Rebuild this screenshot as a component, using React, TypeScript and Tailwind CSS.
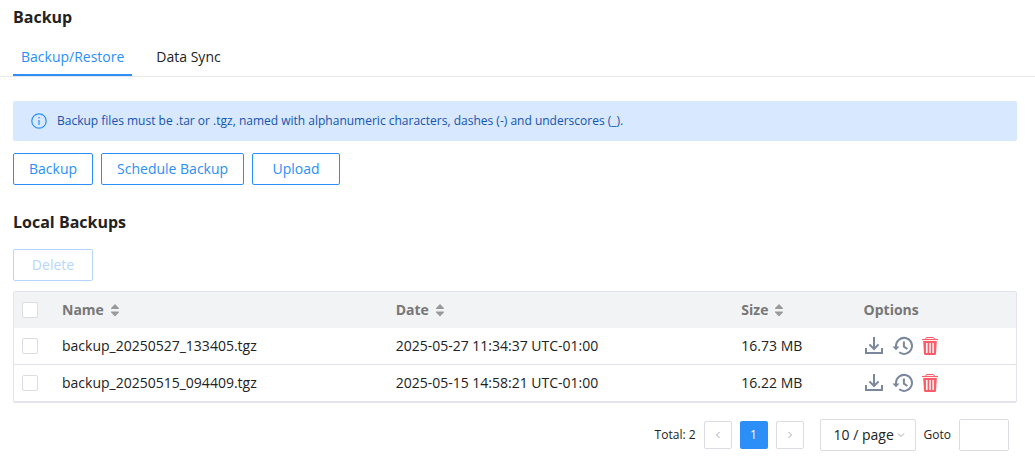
import { useState } from 'react';
import type { ReactNode } from 'react';

type Backup = { name: string; date: string; size: string };

const backups: Backup[] = [
  { name: 'backup_20250527_133405.tgz', date: '2025-05-27 11:34:37 UTC-01:00', size: '16.73 MB' },
  { name: 'backup_20250515_094409.tgz', date: '2025-05-15 14:58:21 UTC-01:00', size: '16.22 MB' },
];

function InfoIcon() {
  return (
    <svg viewBox="0 0 16 16" className="size-4 shrink-0" fill="none" stroke="#2b8ff7" aria-hidden="true">
      <circle cx="8" cy="8" r="7.2" strokeWidth="1.2" />
      <path d="M8 7v5" strokeWidth="1.2" />
      <circle cx="8" cy="4.8" r=".8" fill="#2b8ff7" stroke="none" />
    </svg>
  );
}

function SortIcon() {
  return (
    <svg viewBox="0 0 8 14" className="h-3.5 w-2" fill="#999999" stroke="#999999" strokeLinejoin="round" aria-hidden="true">
      <path d="M4 1.8 7.400 5.400H.6Z" strokeWidth="1.200" />
      <path d="M4 12.600.6 9h6.800Z" strokeWidth="1.200" />
    </svg>
  );
}

function DownloadIcon() {
  return (
    <svg viewBox="0 0 20 20" className="size-5" fill="none" stroke="#7a879c" strokeWidth="2" aria-hidden="true">
      <path d="M10 1v12" />
      <path d="M5.400 8.400 10 13l4.600-4.600" />
      <path d="M2 12v5h16v-5" />
    </svg>
  );
}

function HistoryIcon() {
  return (
    <svg viewBox="0 0 22 20" className="h-5 w-[22px]" fill="none" stroke="#7a879c" strokeWidth="2" aria-hidden="true">
      <path d="M4 11.500V10A8 8 0 1 1 7.200 16.300" />
      <path d="M.4 10.400h7.200L4 14.200Z" fill="#7a879c" stroke="none" />
      <path d="M11.900 5.500v5.100l3.500 2.400" />
    </svg>
  );
}

function TrashIcon() {
  return (
    <svg viewBox="0 0 16 20" className="h-5 w-4" fill="none" stroke="#fc5d68" aria-hidden="true">
      <path d="M3.500 3 4.500 1.500h7L12.500 3" strokeWidth="1" />
      <path d="M0 3.500h16" strokeWidth="1.200" />
      <path d="M1.200 5h13.600l-.8 12.800q-.1 1.200-1.200 1.200H3.200q-1.100 0-1.200-1.200Z" fill="#fc5d68" stroke="none" />
      <path d="M4.800 7v10M8 7v10M11.200 7v10" stroke="#ffffff" strokeWidth="1.500" />
    </svg>
  );
}

function Chevron({ d }: { d: string }) {
  return (
    <svg viewBox="0 0 8 8" className="size-2" fill="none" stroke="#a8a8a8" aria-hidden="true">
      <path d={d} />
    </svg>
  );
}

function OutlineButton({ children, disabled, wide }: { children: ReactNode; disabled?: boolean; wide?: boolean }) {
  return (
    <button
      type="button"
      disabled={disabled}
      className={`h-8 rounded-xs border border-[#2b8ff7] text-[#2b8ff7] disabled:border-[#b5d6fe] disabled:text-[#b5d6fe] ${wide ? 'min-w-22' : 'min-w-20 px-[15px]'}`}
    >
      {children}
    </button>
  );
}

function Check({ label }: { label: string }) {
  return (
    <input
      type="checkbox"
      aria-label={label}
      className="block size-4 appearance-none rounded-xs border border-[#dcdce3] bg-white checked:border-[#2b8ff7] checked:bg-[#2b8ff7]"
    />
  );
}

function SortHeader({ children }: { children: string }) {
  return (
    <th scope="col" className="h-9 px-2 text-left font-bold">
      <button type="button" className="flex items-center gap-[7px]">
        {children}
        <SortIcon />
      </button>
    </th>
  );
}

export default function App() {
  const [page, setPage] = useState('');

  return (
    <main className="bg-white pb-3 font-['Open_Sans','Noto_Sans',sans-serif] text-sm leading-5 text-[#222222]">
      <h1 className="px-[13px] pt-[5px] text-base leading-6 font-bold">Backup</h1>

      <nav className="mt-2 flex gap-4 border-b border-[#e8e8e8] px-[13px]">
        <a href="#restore" aria-current="page" className="border-b-2 border-[#2b8ff7] px-2 pt-[10px] pb-[7px] text-[#2b8ff7]">
          Backup/Restore
        </a>
        <a href="#sync" className="border-b-2 border-transparent px-2 pt-[10px] pb-[7px]">
          Data Sync
        </a>
      </nav>

      <div className="mr-[18px] ml-[13px] pt-6">
        <p className="flex min-h-10 items-center gap-[10px] rounded-xs bg-[#d7e8ff] px-[18px] text-xs text-[#1554ad]">
          <InfoIcon />
          Backup files must be .tar or .tgz, named with alphanumeric characters, dashes (-) and underscores (_).
        </p>

        <div className="mt-3 flex gap-2">
          <OutlineButton>Backup</OutlineButton>
          <OutlineButton>Schedule Backup</OutlineButton>
          <OutlineButton wide>Upload</OutlineButton>
        </div>

        <h2 className="mt-[25px] mb-[15px] text-base leading-6 font-bold">Local Backups</h2>
        <OutlineButton disabled>Delete</OutlineButton>

        <div className="mt-[10px] rounded-xs border border-[#e2e3ee]">
          <table className="w-full table-fixed border-separate border-spacing-0">
            <colgroup>
              <col className="w-10" />
              <col className="w-[33.3%]" />
              <col className="w-[34.5%]" />
              <col className="w-[12.2%]" />
              <col />
            </colgroup>
            <thead className="bg-[#f2f3f5] text-[#777777]">
              <tr>
                <th scope="col" className="h-9 px-2">
                  <Check label="Select all backups" />
                </th>
                <SortHeader>Name</SortHeader>
                <SortHeader>Date</SortHeader>
                <SortHeader>Size</SortHeader>
                <th scope="col" className="h-9 px-2 text-left font-bold">Options</th>
              </tr>
            </thead>
            <tbody>
              {backups.map((b) => (
                <tr key={b.name} className="*:h-[37px] *:border-b *:border-[#e2e3ee] *:px-2">
                  <td>
                    <Check label={`Select ${b.name}`} />
                  </td>
                  <td>{b.name}</td>
                  <td>{b.date}</td>
                  <td>{b.size}</td>
                  <td>
                    <div className="flex items-center gap-2">
                      <button type="button" aria-label={`Download ${b.name}`}>
                        <DownloadIcon />
                      </button>
                      <button type="button" aria-label={`Restore ${b.name}`}>
                        <HistoryIcon />
                      </button>
                      <button type="button" aria-label={`Delete ${b.name}`}>
                        <TrashIcon />
                      </button>
                    </div>
                  </td>
                </tr>
              ))}
            </tbody>
          </table>
        </div>

        <div className="mt-4 flex items-center justify-end gap-2 pr-2 text-xs">
          <span>Total: 2</span>
          <button type="button" disabled aria-label="Previous page" className="flex size-7 items-center justify-center rounded-xs border border-[#dcdce3]">
            <Chevron d="M5.500 1 2.500 4l3 3" />
          </button>
          <button type="button" aria-current="page" className="size-7 rounded-xs bg-[#2b8ff7] text-white">
            1
          </button>
          <button type="button" disabled aria-label="Next page" className="flex size-7 items-center justify-center rounded-xs border border-[#dcdce3]">
            <Chevron d="M2.500 1l3 3-3 3" />
          </button>
          <div className="ml-2 grid items-center">
            <select
              aria-label="Backups per page"
              className="col-start-1 row-start-1 h-8 w-24 appearance-none rounded-xs border border-[#dcdce3] bg-white pl-[13px] text-sm"
            >
              <option>10 / page</option>
              <option>20 / page</option>
            </select>
            <span className="pointer-events-none col-start-1 row-start-1 mr-[11px] justify-self-end">
              <Chevron d="M1 2.500l3 3 3-3" />
            </span>
          </div>
          <label className="flex items-center gap-2">
            Goto
            <input
              type="text"
              value={page}
              onChange={(e) => setPage(e.target.value)}
              className="h-8 w-[50px] rounded-xs border border-[#dcdce3] px-2"
            />
          </label>
        </div>
      </div>
    </main>
  );
}
